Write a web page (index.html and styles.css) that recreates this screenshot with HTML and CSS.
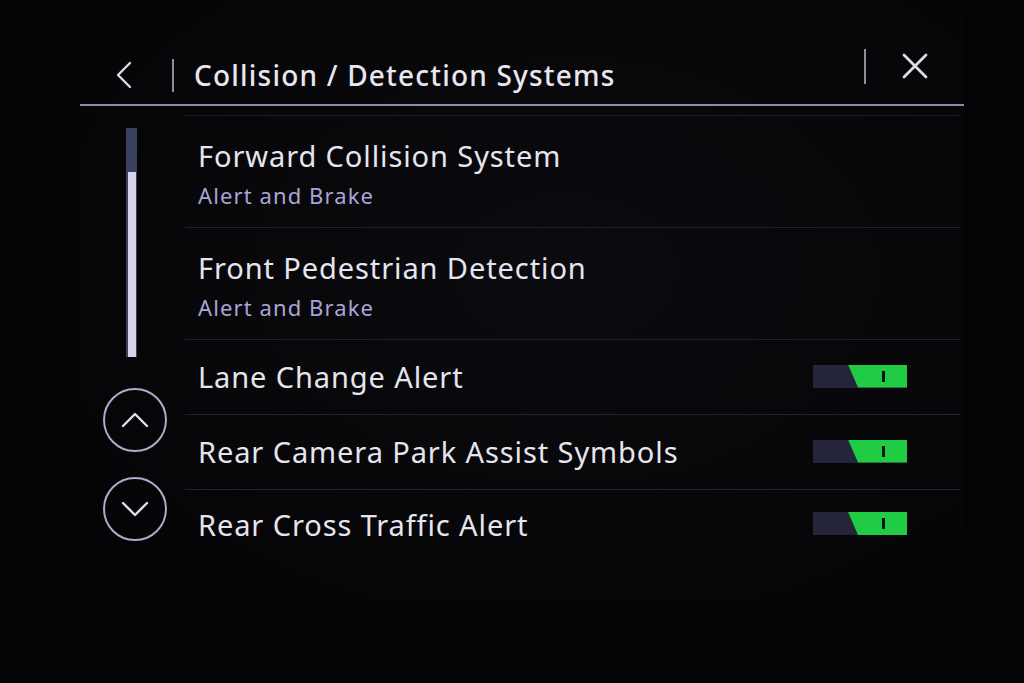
FILE: index.html
```html
<!DOCTYPE html>
<html>
<head>
<meta charset="utf-8">
<link rel="stylesheet" href="styles.css">
</head>
<body>
<div class="screen">
  <header class="header">
    <button class="back" aria-label="Back">
      <svg width="30" height="30" viewBox="0 0 30 30"><path d="M20 3 L8 15 L20 27" fill="none" stroke="#dcdbe6" stroke-width="2.4" stroke-linecap="round" stroke-linejoin="round"/></svg>
    </button>
    <span class="vdiv"></span>
    <h1 class="title">Collision / Detection Systems</h1>
    <span class="vdiv vdiv-right"></span>
    <button class="close" aria-label="Close">
      <svg width="26" height="26" viewBox="0 0 26 26"><path d="M2 2 L24 24 M24 2 L2 24" fill="none" stroke="#dcdbe6" stroke-width="2.8" stroke-linecap="round"/></svg>
    </button>
  </header>
  <div class="main">
    <aside class="side">
      <div class="scroll"><div class="thumb"></div></div>
      <button class="circle" aria-label="Scroll up">
        <svg width="28" height="16" viewBox="0 0 28 16"><path d="M2 14 L14 2 L26 14" fill="none" stroke="#e2e1ee" stroke-width="2.4" stroke-linecap="round" stroke-linejoin="round"/></svg>
      </button>
      <button class="circle circle-down" aria-label="Scroll down">
        <svg width="28" height="16" viewBox="0 0 28 16"><path d="M2 2 L14 14 L26 2" fill="none" stroke="#e2e1ee" stroke-width="2.4" stroke-linecap="round" stroke-linejoin="round"/></svg>
      </button>
    </aside>
    <ul class="list">
      <li class="row row-tall">
        <div class="name">Forward Collision System</div>
        <div class="sub">Alert and Brake</div>
      </li>
      <li class="row row-tall">
        <div class="name">Front Pedestrian Detection</div>
        <div class="sub">Alert and Brake</div>
      </li>
      <li class="row row-toggle">
        <span class="name">Lane Change Alert</span>
        <span class="toggle"><span class="on"></span><span class="mark"></span></span>
      </li>
      <li class="row row-toggle">
        <span class="name">Rear Camera Park Assist Symbols</span>
        <span class="toggle"><span class="on"></span><span class="mark"></span></span>
      </li>
      <li class="row row-toggle row-last">
        <span class="name">Rear Cross Traffic Alert</span>
        <span class="toggle"><span class="on"></span><span class="mark"></span></span>
      </li>
    </ul>
  </div>
</div>
</body>
</html>
```

FILE: styles.css
```css
* { box-sizing: border-box; }
html, body {
  margin: 0;
  padding: 0;
  width: 1024px;
  height: 683px;
  overflow: hidden;
  background: #040406;
  font-family: "Noto Sans", "Open Sans", sans-serif;
  color: #e6e5ee;
}
button {
  background: none;
  border: 0;
  padding: 0;
  margin: 0;
  display: flex;
  align-items: center;
  justify-content: center;
  cursor: pointer;
}
.screen {
  margin-left: 80px;
  width: 884px;
  height: 600px;
  background: radial-gradient(ellipse at 55% 45%, #0b0b10 0%, #070709 60%, #040406 100%);
}
.header {
  height: 106px;
  padding-top: 46px;
  display: flex;
  align-items: center;
  border-bottom: 2px solid #8c8ca6;
}
.back {
  width: 30px;
  height: 30px;
  margin-left: 30px;
}
.vdiv {
  width: 2px;
  height: 33px;
  background: #8d8d9c;
  margin-left: 32px;
}
.title {
  margin: 0 0 0 20px;
  flex: 1;
  font-size: 28px;
  font-weight: 500;
  letter-spacing: 1.2px;
  color: #e8e7ef;
  line-height: 34px;
}
.vdiv-right {
  height: 35px;
  margin-left: 0;
  margin-bottom: 18px;
}
.close {
  width: 26px;
  height: 26px;
  margin-left: 36px;
  margin-right: 36px;
  margin-bottom: 18px;
}
.main {
  display: flex;
}
.side {
  width: 105px;
  display: flex;
  flex-direction: column;
  align-items: flex-start;
}
.scroll {
  margin-top: 22px;
  margin-left: 46px;
  width: 11px;
  height: 229px;
  background: #3a4160;
  display: flex;
  flex-direction: column;
  justify-content: flex-end;
  align-items: center;
}
.thumb {
  width: 8px;
  height: 185px;
  background: #d6d4e8;
}
.circle {
  margin-top: 31px;
  margin-left: 23px;
  width: 64px;
  height: 64px;
  border: 2px solid #aeabcc;
  border-radius: 50%;
}
.circle-down {
  margin-top: 25px;
}
.list {
  list-style: none;
  margin: 9px 0 0 0;
  padding: 0;
  width: 775px;
  border-top: 1px solid #1c1c26;
}
.row {
  border-bottom: 1px solid #22222e;
  padding-left: 13px;
}
.name {
  font-size: 29px;
  line-height: 34px;
  letter-spacing: 0.9px;
}
.row-tall {
  height: 112px;
  padding-top: 23px;
}
.sub {
  margin-top: 9px;
  font-size: 22px;
  line-height: 26px;
  letter-spacing: 1.1px;
  color: #a8a5d8;
}
.row-toggle {
  height: 75px;
  display: flex;
  align-items: center;
  justify-content: space-between;
  padding-right: 53px;
}
.row-last {
  height: 69px;
  border-bottom: 0;
}
.toggle {
  position: relative;
  width: 94px;
  height: 23px;
  background: #24253a;
  margin-top: -2px;
}
.toggle .on {
  position: absolute;
  inset: 0;
  background: #1fcc43;
  clip-path: polygon(35px 0, 94px 0, 94px 23px, 45px 23px);
}
.toggle .mark {
  position: absolute;
  left: 69px;
  top: 6px;
  width: 3px;
  height: 11px;
  background: #0c140e;
}
```
